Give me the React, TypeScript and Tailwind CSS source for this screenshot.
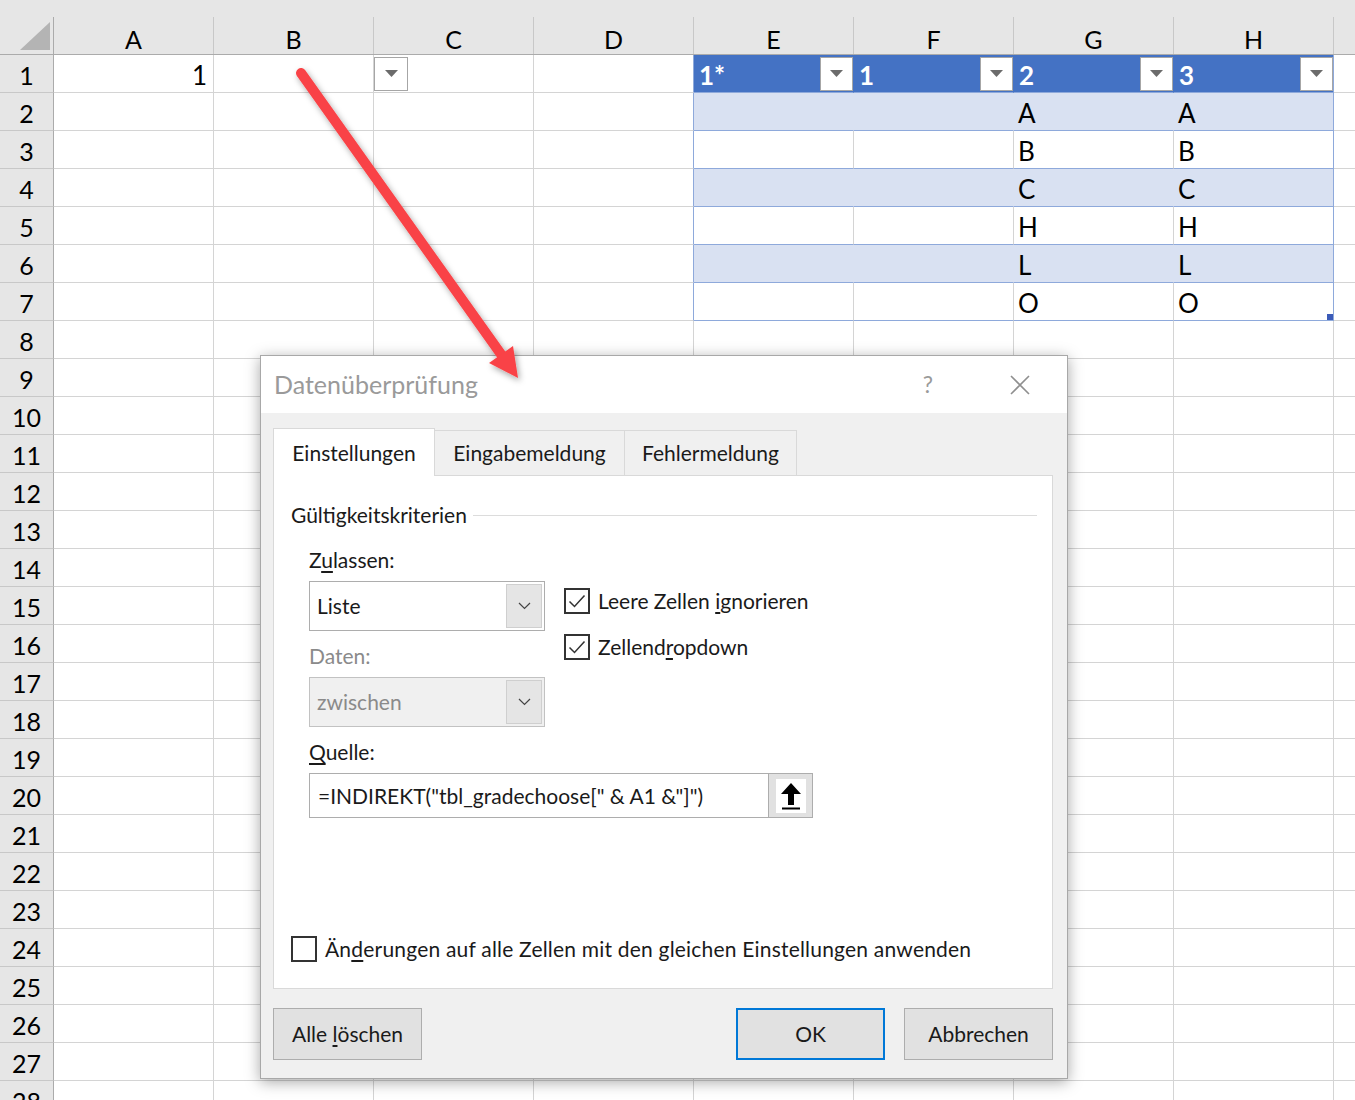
import React from 'react';

const COLS = ['A', 'B', 'C', 'D', 'E', 'F', 'G', 'H'];
const ROW_COUNT = 28;
const TABLE_HEAD = ['1*', '1', '2', '3'];
const TABLE_BODY: Record<number, string> = { 2: 'A', 3: 'B', 4: 'C', 5: 'H', 6: 'L', 7: 'O' };

function FilterButton() {
  return (
    <div className="w-[33px] h-[34px] bg-white border border-[#a6a6a6] flex items-center justify-center shrink-0">
      <svg width="13" height="7" viewBox="0 0 13 7">
        <path d="M0 0h13L6.5 7z" fill="#6b6b6b" />
      </svg>
    </div>
  );
}

function cellClass(row: number, col: number) {
  const inTable = row <= 7 && col >= 4 && col <= 7;
  const last = col === 7;
  if (!inTable) {
    if (col === 3 && row <= 7) return 'bg-white border-b-[#d4d4d4] border-r-[#8ea9db]';
    return 'bg-white border-b-[#d4d4d4] border-r-[#d4d4d4]';
  }
  if (row === 1) {
    return last
      ? 'bg-[#4472c4] border-b-[#8ea9db] border-r-[#8ea9db]'
      : 'bg-[#4472c4] border-b-[#8ea9db] border-r-[#4472c4]';
  }
  if (row % 2 === 0) {
    return last
      ? 'bg-[#d9e1f2] border-b-[#8ea9db] border-r-[#8ea9db]'
      : 'bg-[#d9e1f2] border-b-[#8ea9db] border-r-[#d9e1f2]';
  }
  return last
    ? 'bg-white border-b-[#8ea9db] border-r-[#8ea9db]'
    : 'bg-white border-b-[#8ea9db] border-r-[#d4d4d4]';
}

function CellContent({ row, col }: { row: number; col: number }) {
  if (row === 1 && col === 0) {
    return <div className="flex-1 text-right pr-[6px] pt-[4px]">1</div>;
  }
  if (row === 1 && col === 2) {
    return (
      <div className="w-[34px] h-[34px] bg-white border border-[#a6a6a6] flex items-center justify-center">
        <svg width="13" height="7" viewBox="0 0 13 7">
          <path d="M0 0h13L6.5 7z" fill="#6b6b6b" />
        </svg>
      </div>
    );
  }
  if (row === 1 && col >= 4 && col <= 7) {
    return (
      <>
        <span className="flex-1 pl-[5px] pt-[4px] font-bold text-white">{TABLE_HEAD[col - 4]}</span>
        <FilterButton />
      </>
    );
  }
  if (row >= 2 && row <= 7 && (col === 6 || col === 7)) {
    return <span className="pl-[4px] pt-[4px]">{TABLE_BODY[row]}</span>;
  }
  return null;
}

function Sheet() {
  return (
    <div className="grid grid-cols-[54px_repeat(8,160px)_1fr] font-['Lato',sans-serif] text-black">
      {/* column headers */}
      <div className="h-[55px] bg-[#e6e6e6] border-b border-b-[#ababab] flex flex-col">
        <div className="h-[17px] shrink-0" />
        <div className="flex-1 border-r border-r-[#ababab] flex items-end justify-end pr-[3px] pb-[4px]">
          <svg width="30" height="28" viewBox="0 0 30 28">
            <path d="M0 28L30 28L30 0z" fill="#b4b4b4" />
          </svg>
        </div>
      </div>
      {COLS.map((c) => (
        <div key={c} className="h-[55px] bg-[#e6e6e6] border-b border-b-[#ababab] flex flex-col">
          <div className="h-[17px] shrink-0" />
          <div className="flex-1 border-r border-r-[#c8c8c8] flex items-center justify-center text-[25px] pt-[8px] leading-none">
            {c}
          </div>
        </div>
      ))}
      <div className="h-[55px] bg-[#e6e6e6] border-b border-b-[#ababab]" />

      {Array.from({ length: ROW_COUNT }, (_, i) => i + 1).map((r) => (
        <React.Fragment key={r}>
          <div className="h-[38px] bg-[#e6e6e6] border-r border-b border-r-[#ababab] border-b-[#c8c8c8] flex items-center justify-center text-[25px] pt-[4px]">
            {r}
          </div>
          {COLS.map((c, ci) => (
            <div
              key={c}
              className={`relative h-[38px] border-r border-b flex items-center text-[26px] ${cellClass(r, ci)}`}
            >
              <CellContent row={r} col={ci} />
              {r === 7 && ci === 7 && (
                <div className="absolute right-0 bottom-0 w-[6px] h-[6px] bg-[#3b5bb8]" />
              )}
            </div>
          ))}
          <div className="h-[38px] border-b border-b-[#d4d4d4] bg-white" />
        </React.Fragment>
      ))}
    </div>
  );
}

function Chevron({ color = '#444' }: { color?: string }) {
  return (
    <svg width="13" height="8" viewBox="0 0 13 8">
      <path d="M1 1l5.5 5.5L12 1" fill="none" stroke={color} strokeWidth="1.2" />
    </svg>
  );
}

function Checkbox({ checked }: { checked: boolean }) {
  return (
    <div className="w-[26px] h-[26px] border-2 border-[#333] bg-white flex items-center justify-center shrink-0">
      {checked && (
        <svg width="18" height="14" viewBox="0 0 18 14">
          <path d="M1.5 7.5l5 5L16.5 1.5" fill="none" stroke="#333" strokeWidth="1.5" />
        </svg>
      )}
    </div>
  );
}

function Dialog() {
  return (
    <div className="absolute left-[260px] top-[355px] w-[808px] h-[724px] border border-[#a8a8a8] bg-[#f0f0f0] shadow-[0_3px_14px_rgba(0,0,0,0.35)] flex flex-col font-['Lato',sans-serif] text-[21px] text-[#1a1a1a]">
      <div className="h-[57px] bg-white flex items-center pl-[13px] pr-[37px] shrink-0">
        <span className="flex-1 text-[25px] text-[#9a9a9a]">Datenüberprüfung</span>
        <span className="text-[23px] text-[#9a9a9a] mr-[77px]">?</span>
        <svg width="20" height="20" viewBox="0 0 20 20">
          <path d="M1 1l18 18M19 1L1 19" stroke="#8f8f8f" strokeWidth="1.6" />
        </svg>
      </div>

      <div className="flex-1 flex flex-col pl-[12px] pr-[14px] pt-[15px]">
        {/* tabs */}
        <div className="flex items-end h-[47px]">
          <div className="relative z-10 -mb-px w-[162px] h-[48px] bg-white border-l border-t border-r border-[#d9d9d9] flex items-center justify-center">
            Einstellungen
          </div>
          <div className="w-[190px] h-[45px] border-t border-r border-[#d9d9d9] flex items-center justify-center">
            Eingabemeldung
          </div>
          <div className="w-[172px] h-[45px] border-t border-r border-[#d9d9d9] flex items-center justify-center">
            Fehlermeldung
          </div>
        </div>

        {/* panel */}
        <div className="h-[514px] bg-white border border-[#d9d9d9] flex flex-col">
          <div className="flex items-center h-[28px] mt-[25px] pl-[17px] pr-[15px]">
            <span>Gültigkeitskriterien</span>
            <div className="flex-1 h-px bg-[#dcdcdc] ml-[6px]" />
          </div>

          <div className="pl-[35px] flex flex-col">
            <div className="h-[28px] mt-[17px] flex items-center">
              <span>
                Z<span className="underline underline-offset-[3px]">u</span>lassen:
              </span>
            </div>

            <div className="flex mt-[7px]">
              <div className="w-[236px] flex flex-col">
                <div className="h-[50px] border border-[#adadad] bg-white flex">
                  <span className="flex-1 pl-[7px] flex items-center">Liste</span>
                  <div className="w-[36px] m-[2px] bg-[#e5e5e5] border border-[#cfcfcf] flex items-center justify-center">
                    <Chevron />
                  </div>
                </div>
                <div className="h-[28px] mt-[11px] flex items-center text-[#8a8a8a]">Daten:</div>
                <div className="h-[50px] mt-[7px] border border-[#c2c2c2] bg-[#f0f0f0] flex">
                  <span className="flex-1 pl-[7px] flex items-center text-[#8a8a8a]">zwischen</span>
                  <div className="w-[36px] m-[2px] bg-[#e5e5e5] border border-[#cfcfcf] flex items-center justify-center">
                    <Chevron />
                  </div>
                </div>
              </div>

              <div className="ml-[19px] pt-[6px] flex flex-col gap-[18px]">
                <div className="h-[28px] flex items-center gap-[8px]">
                  <Checkbox checked />
                  <span>
                    Leere Zellen <span className="underline underline-offset-[3px]">i</span>gnorieren
                  </span>
                </div>
                <div className="h-[28px] flex items-center gap-[8px]">
                  <Checkbox checked />
                  <span>
                    Zellend<span className="underline underline-offset-[3px]">r</span>opdown
                  </span>
                </div>
              </div>
            </div>

            <div className="h-[28px] mt-[11px] flex items-center">
              <span>
                <span className="underline underline-offset-[3px]">Q</span>uelle:
              </span>
            </div>
            <div className="w-[504px] h-[45px] mt-[7px] border border-[#adadad] bg-white flex">
              <span className="flex-1 pl-[8px] flex items-center">=INDIREKT("tbl_gradechoose[" &amp; A1 &amp;"]")</span>
              <div className="w-[44px] bg-[#e1e1e1] border-l border-[#adadad] flex items-center justify-center">
                <div className="w-[30px] h-[34px] bg-white flex items-center justify-center">
                  <svg width="22" height="28" viewBox="0 0 22 28">
                    <path d="M11 1L1 12h7v11h6V12h7z" fill="#000" />
                    <rect x="2" y="25.5" width="18" height="2" fill="#000" />
                  </svg>
                </div>
              </div>
            </div>
          </div>

          <div className="mt-auto mb-[25px] pl-[17px] h-[28px] flex items-center gap-[8px]">
            <Checkbox checked={false} />
            <span className="tracking-[0.2px]">
              Än<span className="underline underline-offset-[3px]">d</span>erungen auf alle Zellen mit den gleichen
              Einstellungen anwenden
            </span>
          </div>
        </div>

        {/* buttons */}
        <div className="flex mt-[19px]">
          <button className="w-[149px] h-[52px] bg-[#e1e1e1] border border-[#adadad]">
            Alle <span className="underline underline-offset-[3px]">l</span>öschen
          </button>
          <button className="ml-auto w-[149px] h-[52px] bg-[#e1e1e1] border-2 border-[#0078d7]">OK</button>
          <button className="ml-[19px] w-[149px] h-[52px] bg-[#e1e1e1] border border-[#adadad]">Abbrechen</button>
        </div>
      </div>
    </div>
  );
}

function RedArrow() {
  return (
    <svg className="absolute left-0 top-0 z-20 pointer-events-none" width="1355" height="1100" viewBox="0 0 1355 1100">
      <defs>
        <filter id="arrowShadow" x="-20%" y="-20%" width="140%" height="140%">
          <feDropShadow dx="2" dy="3" stdDeviation="3" floodColor="#000" floodOpacity="0.35" />
        </filter>
      </defs>
      <g filter="url(#arrowShadow)">
        <line x1="301" y1="73" x2="503" y2="357" stroke="#f94346" strokeWidth="10" strokeLinecap="round" />
        <path d="M518 378L489 363L513 346z" fill="#f94346" />
      </g>
    </svg>
  );
}

export default function App() {
  return (
    <div className="relative w-[1355px] h-[1100px] overflow-hidden bg-white">
      <Sheet />
      <Dialog />
      <RedArrow />
    </div>
  );
}
